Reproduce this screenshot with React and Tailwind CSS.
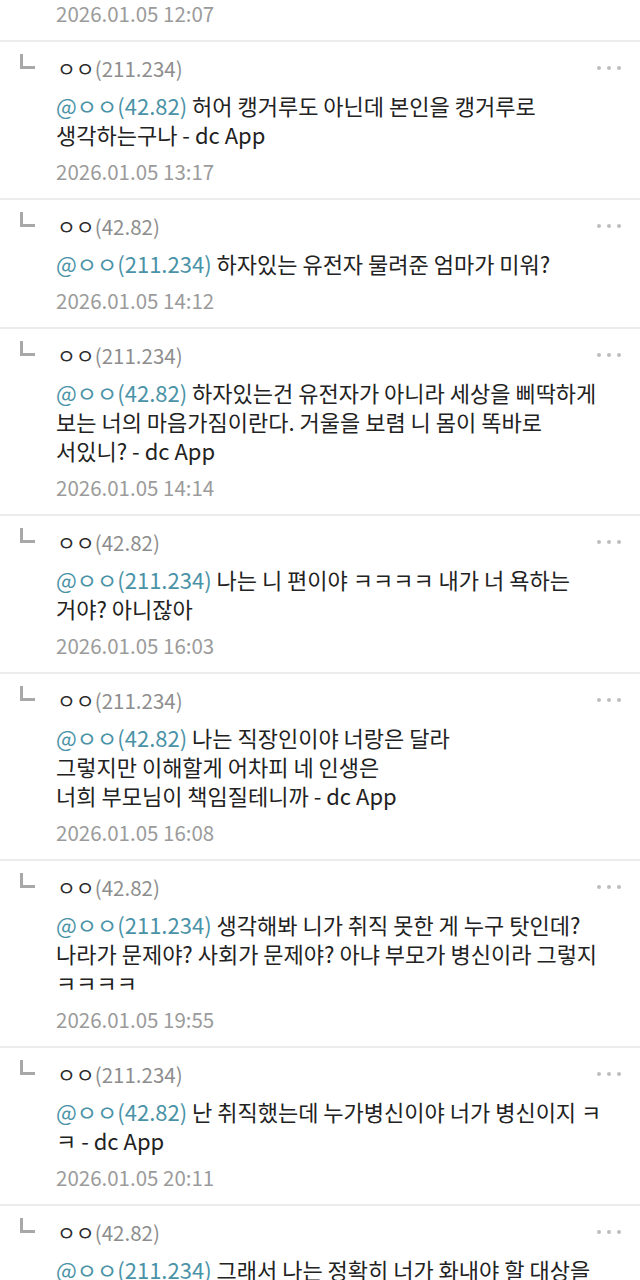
import React from "react";

const comments = [
  {
    ip: "211.234",
    to: "42.82",
    lines: ["허어 캥거루도 아닌데 본인을 캥거루로", "생각하는구나 - dc App"],
    date: "2026.01.05 13:17",
  },
  {
    ip: "42.82",
    to: "211.234",
    lines: ["하자있는 유전자 물려준 엄마가 미워?"],
    date: "2026.01.05 14:12",
  },
  {
    ip: "211.234",
    to: "42.82",
    lines: [
      "하자있는건 유전자가 아니라 세상을 삐딱하게",
      "보는 너의 마음가짐이란다. 거울을 보렴 니 몸이 똑바로",
      "서있니? - dc App",
    ],
    date: "2026.01.05 14:14",
  },
  {
    ip: "42.82",
    to: "211.234",
    lines: ["나는 니 편이야 ㅋㅋㅋㅋ 내가 너 욕하는", "거야? 아니잖아"],
    date: "2026.01.05 16:03",
  },
  {
    ip: "211.234",
    to: "42.82",
    lines: [
      "나는 직장인이야 너랑은 달라",
      "그렇지만 이해할게 어차피 네 인생은",
      "너희 부모님이 책임질테니까 - dc App",
    ],
    date: "2026.01.05 16:08",
  },
  {
    ip: "42.82",
    to: "211.234",
    lines: [
      "생각해봐 니가 취직 못한 게 누구 탓인데?",
      "나라가 문제야? 사회가 문제야? 아냐 부모가 병신이라 그렇지",
      "ㅋㅋㅋㅋ",
    ],
    date: "2026.01.05 19:55",
  },
  {
    ip: "211.234",
    to: "42.82",
    lines: ["난 취직했는데 누가병신이야 너가 병신이지 ㅋ", "ㅋ - dc App"],
    date: "2026.01.05 20:11",
  },
  {
    ip: "42.82",
    to: "211.234",
    lines: ["그래서 나는 정확히 너가 화내야 할 대상을"],
    date: "",
  },
];

const Comment = ({ c }) => (
  <div className="border-t-2 border-[#ececec] pt-[12px] pb-[13px] pr-[19px]">
    <div className="flex items-center h-[28px]">
      <div className="w-[57px] self-start pl-[20px]">
        <div className="w-[15px] h-[15px] border-l-[3px] border-b-[3px] border-[#a8a8a8]"></div>
      </div>
      <div className="flex-1 text-[20.5px] leading-[28px] whitespace-nowrap">
        <span className="text-[#2a2a2a]">ㅇㅇ</span>
        <span className="text-[#8d8d8d]">({c.ip})</span>
      </div>
      <div className="flex gap-[6px] items-center">
        <span className="w-[4px] h-[4px] rounded-full bg-[#bdbdbd]"></span>
        <span className="w-[4px] h-[4px] rounded-full bg-[#bdbdbd]"></span>
        <span className="w-[4px] h-[4px] rounded-full bg-[#bdbdbd]"></span>
      </div>
    </div>
    <div className="pl-[56px] mt-[9px] text-[22px] leading-[29px] text-[#222] whitespace-nowrap">
      {c.lines.map((l, i) => (
        <div key={i}>
          {i === 0 && <span className="text-[#4a93a7]">@ㅇㅇ({c.to}) </span>}
          {l}
        </div>
      ))}
    </div>
    {c.date && (
      <div className="pl-[56px] mt-[8px] text-[20.5px] leading-[28px] text-[#9b9b9b]">
        {c.date}
      </div>
    )}
  </div>
);

export default function App() {
  return (
    <div
      className="w-[640px] h-[1280px] overflow-hidden bg-white"
      style={{ fontFamily: '"Noto Sans CJK KR", "Noto Sans", sans-serif' }}
    >
      <div className="pl-[56px] h-[40px] pt-0 text-[20.5px] leading-[26px] text-[#9b9b9b]">
        2026.01.05 12:07
      </div>
      {comments.map((c, i) => (
        <Comment key={i} c={c} />
      ))}
    </div>
  );
}
